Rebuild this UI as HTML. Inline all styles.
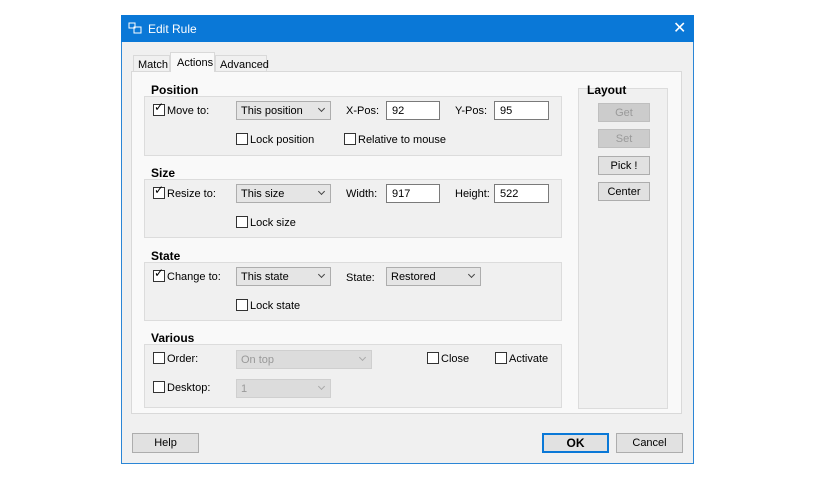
<!DOCTYPE html><html><head><style>
*{box-sizing:border-box}
body{margin:0;width:836px;height:484px;background:#fff;font-family:"Liberation Sans",sans-serif;font-size:11px;color:#000;position:relative;overflow:hidden}
.a{position:absolute}
.win{left:121px;top:15px;width:573px;height:449px;background:#f0f0f0;border:1px solid #2b86d6}
.title{left:121px;top:15px;width:573px;height:27px;background:#0a78d7;color:#fff;font-size:12px}
.panel{left:131px;top:71px;width:551px;height:343px;background:#f9f9f9;border:1px solid #d9d9d9}
.grp{background:#f0f0f0;border:1px solid #dcdcdc}
.gt{font-weight:bold;font-size:12px}
.cb{width:12px;height:12px;border:1px solid #333;background:#fff}
.dd{height:19px;background:#e5e5e5;border:1px solid #adadad;padding:3px 4px 1px}
.dd:after{content:"";position:absolute;right:6px;top:4px;width:4px;height:4px;border-right:1px solid #444;border-bottom:1px solid #444;transform:rotate(45deg)}
.dis{background:#dcdcdc;border-color:#cfcfcf;color:#999}
.dis:after{border-color:#aaa}
.tb{height:19px;background:#fff;border:1px solid #7a7a7a;padding:3px 5px 1px}
.btn{height:19px;background:#e1e1e1;border:1px solid #adadad;text-align:center;line-height:18px}
.bd{color:#9a9a9a;background:#ccc;border-color:#bfbfbf}
</style></head><body>
<div class="a win"></div>
<div class="a title"><svg class="a" style="left:7px;top:7px" width="14" height="12"><rect x="1" y="1" width="6" height="5" fill="none" stroke="#fff"/><rect x="6" y="5" width="7" height="6" fill="none" stroke="#fff"/></svg><span class="a" style="left:27px;top:7px">Edit Rule</span><span class="a" style="left:552px;top:3px;font-size:16px">✕</span></div>
<div class="a panel"></div>
<div class="a" style="left:133px;top:55px;width:37px;height:17px;border:1px solid #d9d9d9;border-bottom:none;padding:3px 4px">Match</div>
<div class="a" style="left:170px;top:52px;width:45px;height:20px;background:#f9f9f9;border:1px solid #d9d9d9;border-bottom:none;padding:4px 6px">Actions</div>
<div class="a" style="left:215px;top:55px;width:52px;height:17px;border:1px solid #d9d9d9;border-bottom:none;padding:3px 4px">Advanced</div>

<div class="a grp" style="left:144px;top:96px;width:418px;height:60px"></div>
<div class="a gt" style="left:151px;top:83px">Position</div>
<div class="a cb" style="left:153px;top:104px"></div><span class="a" style="left:154px;top:100px;font-size:12px">✓</span><span class="a" style="left:167px;top:105px">Move to:</span>
<div class="a dd" style="left:236px;top:101px;width:95px">This position</div>
<span class="a" style="left:346px;top:105px">X-Pos:</span><div class="a tb" style="left:386px;top:101px;width:54px">92</div>
<span class="a" style="left:455px;top:105px">Y-Pos:</span><div class="a tb" style="left:494px;top:101px;width:55px">95</div>
<div class="a cb" style="left:236px;top:133px"></div><span class="a" style="left:250px;top:134px">Lock position</span>
<div class="a cb" style="left:344px;top:133px"></div><span class="a" style="left:358px;top:134px">Relative to mouse</span>

<div class="a grp" style="left:144px;top:179px;width:418px;height:59px"></div>
<div class="a gt" style="left:151px;top:166px">Size</div>
<div class="a cb" style="left:153px;top:187px"></div><span class="a" style="left:154px;top:183px;font-size:12px">✓</span><span class="a" style="left:167px;top:188px">Resize to:</span>
<div class="a dd" style="left:236px;top:184px;width:95px">This size</div>
<span class="a" style="left:346px;top:188px">Width:</span><div class="a tb" style="left:386px;top:184px;width:54px">917</div>
<span class="a" style="left:455px;top:188px">Height:</span><div class="a tb" style="left:494px;top:184px;width:55px">522</div>
<div class="a cb" style="left:236px;top:216px"></div><span class="a" style="left:250px;top:217px">Lock size</span>

<div class="a grp" style="left:144px;top:262px;width:418px;height:59px"></div>
<div class="a gt" style="left:151px;top:249px">State</div>
<div class="a cb" style="left:153px;top:270px"></div><span class="a" style="left:154px;top:266px;font-size:12px">✓</span><span class="a" style="left:167px;top:271px">Change to:</span>
<div class="a dd" style="left:236px;top:267px;width:95px">This state</div>
<span class="a" style="left:346px;top:272px">State:</span><div class="a dd" style="left:386px;top:267px;width:95px">Restored</div>
<div class="a cb" style="left:236px;top:299px"></div><span class="a" style="left:250px;top:300px">Lock state</span>

<div class="a grp" style="left:144px;top:344px;width:418px;height:64px"></div>
<div class="a gt" style="left:151px;top:331px">Various</div>
<div class="a cb" style="left:153px;top:352px"></div><span class="a" style="left:167px;top:353px">Order:</span>
<div class="a dd dis" style="left:236px;top:350px;width:136px">On top</div>
<div class="a cb" style="left:427px;top:352px"></div><span class="a" style="left:441px;top:353px">Close</span>
<div class="a cb" style="left:495px;top:352px"></div><span class="a" style="left:509px;top:353px">Activate</span>
<div class="a cb" style="left:153px;top:381px"></div><span class="a" style="left:167px;top:382px">Desktop:</span>
<div class="a dd dis" style="left:236px;top:379px;width:95px">1</div>

<div class="a grp" style="left:578px;top:88px;width:90px;height:321px"></div>
<div class="a gt" style="left:587px;top:83px">Layout</div>
<div class="a btn bd" style="left:598px;top:103px;width:52px">Get</div>
<div class="a btn bd" style="left:598px;top:129px;width:52px">Set</div>
<div class="a btn" style="left:598px;top:156px;width:52px">Pick !</div>
<div class="a btn" style="left:598px;top:182px;width:52px">Center</div>

<div class="a btn" style="left:132px;top:433px;width:67px;height:20px">Help</div>
<div class="a btn" style="left:542px;top:433px;width:67px;height:20px;border:2px solid #0a78d7;font-weight:bold;font-size:12px;line-height:16px">OK</div>
<div class="a btn" style="left:616px;top:433px;width:67px;height:20px">Cancel</div>
</body></html>
